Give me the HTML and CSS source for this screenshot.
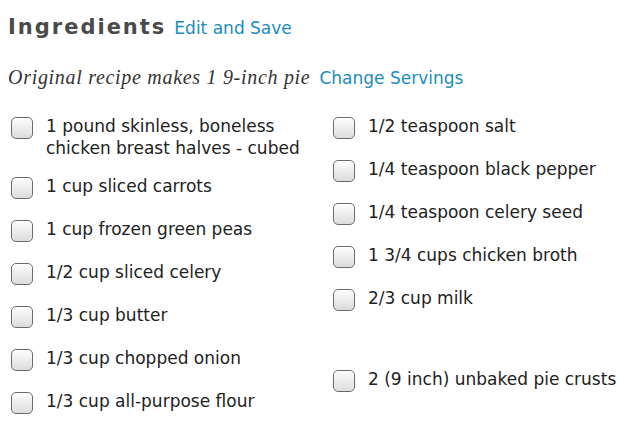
FILE: index.html
```html
<!DOCTYPE html>
<html lang="en">
<head>
  <meta charset="UTF-8" />
  <title>Ingredients</title>
  <link rel="stylesheet" href="styles.css">
</head>
<body>
  <div id="recipe">
    <div class="title-row">
      <h2>Ingredients</h2>
      <a class="link" href="#">Edit and Save</a>
    </div>

    <div class="servings">
      <span class="yield">Original recipe makes 1 9-inch pie</span>
      <a class="link" href="#">Change Servings</a>
    </div>

    <div class="columns">
      <ul class="list">
        <li class="item"><span class="check"></span><span class="text">1 pound skinless, boneless chicken breast halves - cubed</span></li>
        <li class="item"><span class="check"></span><span class="text">1 cup sliced carrots</span></li>
        <li class="item"><span class="check"></span><span class="text">1 cup frozen green peas</span></li>
        <li class="item"><span class="check"></span><span class="text">1/2 cup sliced celery</span></li>
        <li class="item"><span class="check"></span><span class="text">1/3 cup butter</span></li>
        <li class="item"><span class="check"></span><span class="text">1/3 cup chopped onion</span></li>
        <li class="item"><span class="check"></span><span class="text">1/3 cup all-purpose flour</span></li>
      </ul>
      <ul class="list">
        <li class="item"><span class="check"></span><span class="text">1/2 teaspoon salt</span></li>
        <li class="item"><span class="check"></span><span class="text">1/4 teaspoon black pepper</span></li>
        <li class="item"><span class="check"></span><span class="text">1/4 teaspoon celery seed</span></li>
        <li class="item"><span class="check"></span><span class="text">1 3/4 cups chicken broth</span></li>
        <li class="item"><span class="check"></span><span class="text">2/3 cup milk</span></li>
        <li class="item blank"></li>
        <li class="item"><span class="check"></span><span class="text">2 (9 inch) unbaked pie crusts</span></li>
      </ul>
    </div>
  </div>
</body>
</html>
```

FILE: styles.css
```css
body {
  margin: 0;
  background: white;
  font-family: "DejaVu Sans", Verdana, sans-serif;
  color: #222;
}

#recipe {
  padding: 13px 8px 0 8px;
}

.title-row {
  display: flex;
  align-items: baseline;
  gap: 8px;
}

h2 {
  margin: 0;
  font-size: 21px;
  font-weight: bold;
  letter-spacing: 2px;
  color: #4a4a4a;
  line-height: 28px;
}

.link {
  color: #1a8dbd;
  text-decoration: none;
  font-size: 17px;
}

.servings {
  display: flex;
  align-items: baseline;
  gap: 9px;
  margin-top: 25px;
}

.yield {
  font-family: "Liberation Serif", "DejaVu Serif", serif;
  font-style: italic;
  font-size: 20px;
  letter-spacing: 0.7px;
  color: #333;
}

.columns {
  display: grid;
  grid-template-columns: 322px 1fr;
  margin-top: 26px;
}

.list {
  list-style: none;
  margin: 0;
  padding: 0;
}

.item {
  display: flex;
  align-items: flex-start;
  margin-bottom: 16px;
  font-size: 17px;
  line-height: 22px;
}

.item.blank {
  height: 22px;
}

.check {
  flex: none;
  width: 20px;
  height: 20px;
  margin: 2px 13px 3px 3px;
  border: 1px solid #6b6b6b;
  border-radius: 5px;
  background: linear-gradient(to bottom, #fdfdfd, #dcdcdc);
  box-shadow: inset 0 1px 1px white;
}
```
